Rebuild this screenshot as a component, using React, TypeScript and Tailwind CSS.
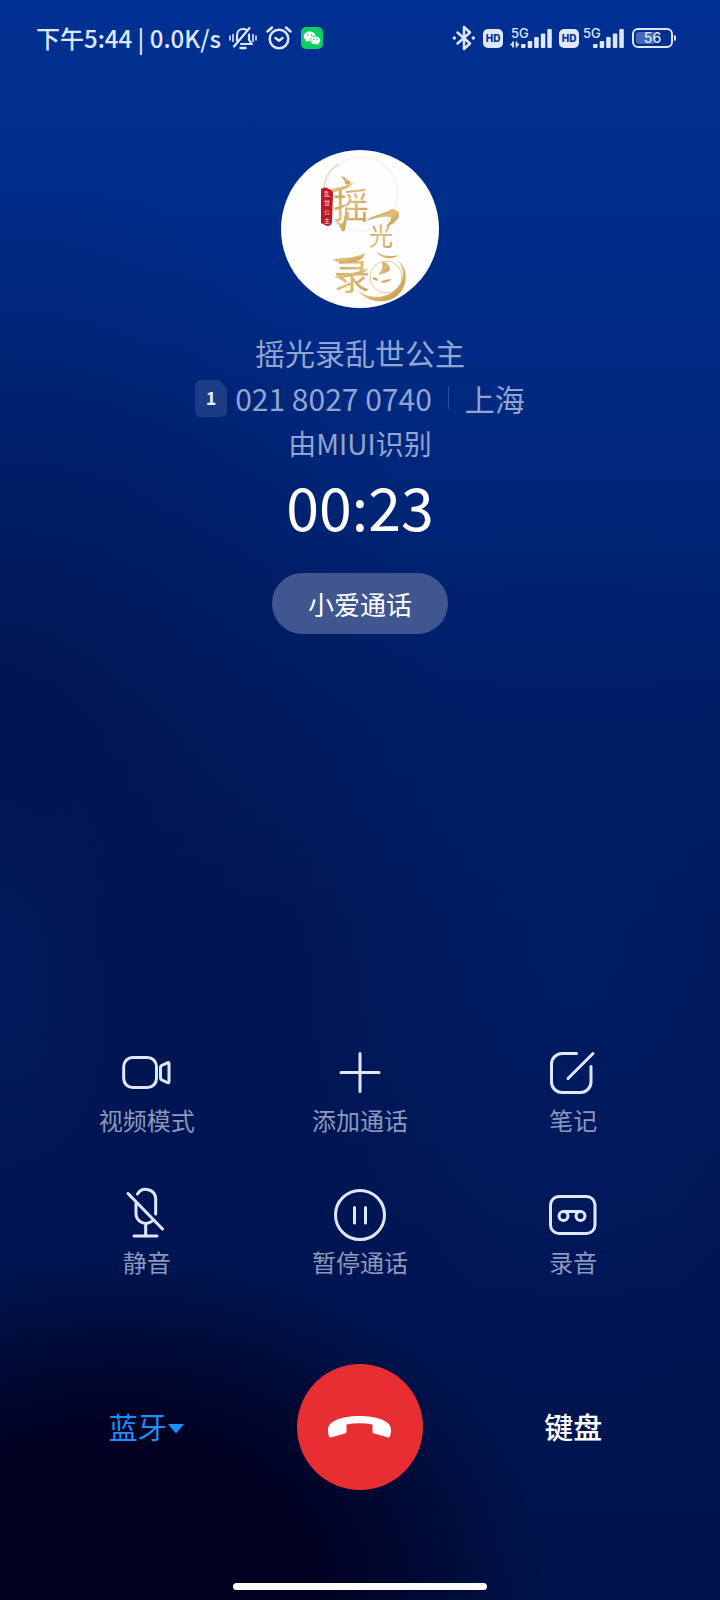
import type { ReactNode } from "react";

function BellOff() {
  return (
    <svg className="h-7 w-7" viewBox="0 0 28 28" fill="none" stroke="currentColor" strokeWidth="2.200" strokeLinecap="round" aria-hidden="true">
      <path d="M8 16.500V11.500C8 7.500 10.500 5 14 5c1.500 0 2.700.3 3.600 1" />
      <path d="M20 10.500V15.500l2.500 4.500H12" />
      <path d="M5 22.500 20.500 4" />
      <path d="M11.500 24h5" strokeWidth="2.500" />
      <path d="M1 12v4M4 10.500v7M24 10.500v7M27 12v4" strokeWidth="1.600" />
    </svg>
  );
}

function Alarm() {
  return (
    <svg className="h-7 w-7" viewBox="0 0 28 28" fill="none" stroke="currentColor" strokeWidth="2.500" strokeLinecap="round" strokeLinejoin="round" aria-hidden="true">
      <circle cx="14" cy="15" r="9.300" />
      <path d="M2.500 7.500 7 3.500M25.500 7.500 21 3.500M10.500 14l3.500 2.800 3.500-2.800" />
    </svg>
  );
}

function WeChat() {
  return (
    <svg className="h-[22px] w-[22px]" viewBox="0 0 22 22" aria-hidden="true">
      <rect width="22" height="22" rx="5" fill="#09cf62" />
      <path fill="#fff" d="M8.800 4.500c-3.400 0-6 2.100-6 4.900 0 1.500.8 2.800 2.100 3.700l-.5 1.900 2-1.100c.8.2 1.600.3 2.400.3 0-3.500 2.700-5.400 5.900-5.400-.5-2.500-3-4.300-5.900-4.300z" />
      <path fill="#fff" d="M14.400 9.500c-2.700 0-4.900 1.700-4.900 3.900s2.200 3.900 4.900 3.900c.6 0 1.200-.1 1.800-.3l1.600.9-.4-1.500c1.100-.8 1.800-1.800 1.800-3 0-2.200-2.100-3.900-4.800-3.900z" />
      <g fill="#09a854">
        <circle cx="6.900" cy="8" r=".8" />
        <circle cx="10.700" cy="8" r=".8" />
        <circle cx="12.900" cy="12.300" r=".7" />
        <circle cx="16" cy="12.300" r=".7" />
      </g>
    </svg>
  );
}

function Bluetooth() {
  return (
    <svg className="h-7 w-6" viewBox="0 0 24 28" fill="none" stroke="currentColor" strokeWidth="2.500" strokeLinejoin="round" strokeLinecap="round" aria-hidden="true">
      <path d="M5.500 8.500 18 19.500 12 25V3l6 5.500L5.500 19.500" />
      <circle cx="2.300" cy="14" r="1" fill="currentColor" strokeWidth="1.400" />
      <circle cx="21.300" cy="14" r="1" fill="currentColor" strokeWidth="1.400" />
    </svg>
  );
}

function HdBadge() {
  return (
    <span className="flex h-[19px] w-5 items-center justify-center rounded-[5px] bg-[#dfe7ff] font-['Inter','Liberation_Sans',sans-serif] text-[10px] leading-none font-extrabold text-[#0a3191]">
      HD
    </span>
  );
}

function Signal({ data = false }: { data?: boolean }) {
  return (
    <svg className="h-6 w-[42px]" viewBox="0 0 42 24" fill="currentColor" role="img" aria-label="5G">
      <text x="1" y="12" fontSize="13" fontWeight="500" fontFamily="Inter, 'Liberation Sans', sans-serif">5G</text>
      <rect x="11" y="18" width="4.500" height="4" rx="1" />
      <rect x="17.700" y="15" width="4.500" height="7" rx="1" />
      <rect x="24.200" y="11" width="4.500" height="11" rx="1" />
      <rect x="30.800" y="7.500" width="4.500" height="14.500" rx="1" />
      <rect x="37.300" y="3" width="4.500" height="19" rx="1" />
      {data && <path d="M3 15.500v6M.5 18.500h2.500M6.500 21.500v-6M9 18.500H6.500" fill="none" stroke="currentColor" strokeWidth="1.800" />}
    </svg>
  );
}

function Battery() {
  return (
    <span className="flex items-center">
      <span className="flex h-5 w-[41px] rounded-[6px] border-2 border-[#dfe7ff] p-0.5">
        <span className="flex flex-1 items-center justify-center rounded-[3px] bg-linear-to-r from-[#4469b8] from-56% to-transparent to-56% font-['Inter','Liberation_Sans',sans-serif] text-sm leading-none font-medium">
          56
        </span>
      </span>
      <span className="ml-px h-1.5 w-0.5 rounded-r bg-[#dfe7ff]" />
    </span>
  );
}

function Avatar() {
  return (
    <svg className="size-[158px] rounded-full bg-[#fefefe]" viewBox="11 10 158 158" role="img" aria-label="摇光录">
      <defs>
        <linearGradient id="gold" x1="0" y1="0" x2="1" y2="1">
          <stop offset="0" stopColor="#b98a3c" />
          <stop offset=".5" stopColor="#e0bf80" />
          <stop offset="1" stopColor="#c2923f" />
        </linearGradient>
      </defs>
      <circle cx="91" cy="54" r="37" fill="none" stroke="#f3eee0" strokeWidth="1.200" />
      <path d="M54 52C53 40 59 30 68 24" fill="none" stroke="#e6d3a8" strokeWidth="1.200" />
      <g fill="url(#gold)" fontFamily="'Noto Sans CJK SC', sans-serif">
        <text x="63" y="79" fontSize="36" fontWeight="400">摇</text>
        <text x="99" y="105" fontSize="24" fontWeight="400">光</text>
        <text x="64" y="150" fontSize="36" fontWeight="400">录</text>
      </g>
      <g fill="url(#gold)">
        <path d="M54 54C62 46 72 49 84 42c-7 9-16 9-30 12z" />
        <path d="M71 36c4 1 6 4 10 6-2 3-4 3-6 2 0-3-2-5-4-8z" />
        <path d="M76 64c2 9 1 17-1 25 0 3-3 3-4 0l-5-8c3 2 6 4 7 1 2-5 2-12 3-18z" />
        <path d="M96 81c5-6 16-6 26-12 5 1 8 3 7 8-3 5-8 8-13 10 2-4 5-6 5-10-8-1-16 1-25 4z" />
        <path d="M106 111c4 5 16 6 23 4-5 4-17 6-23-4z" />
        <path d="M88 150c7 8 27 10 37 0 9-8 11-20 3-29 11 7 10 25 0 34-11 10-32 8-40-5z" />
        <path d="M112 122c5 0 8 3 8 8-3 2-6 4-12 5 3-4 6-8 4-13z" />
        <path d="M102 138c4-1 6 0 6 3-2 0-4-1-6-3zM110 142c3-2 7-3 12-3-3 3-8 5-12 3z" />
        <path d="M62 120c11-3 21-1 33-7-1 7-8 8-14 9-6 1-13 0-19-2z" />
        <path d="M64 137c9-4 21-3 34-9-4 6-9 6-15 8-6 1-12 3-19 1z" />
      </g>
      <circle cx="116" cy="137" r="16" fill="none" stroke="#e3cb97" strokeWidth="1" />
      <path d="M51 49q4-3 8 0 4 1 4 5l-1 27q0 5-5 5l-6-3z" fill="#bd1a25" />
      <g fill="#f7dada" fontSize="6" fontFamily="'Noto Sans CJK SC', sans-serif" textAnchor="middle">
        <text x="57" y="56">乱</text>
        <text x="57" y="65">世</text>
        <text x="57" y="74">公</text>
        <text x="57" y="83">主</text>
      </g>
    </svg>
  );
}

const actions: { label: string; icon: ReactNode }[] = [
  {
    label: "视频模式",
    icon: (
      <>
        <rect x="6.700" y="15.500" width="32.800" height="30" rx="9" />
        <path d="M43.500 25.500q0-1.500 1.200-2l5.500-2.700q1.800-.8 1.800 1V39.500q0 1.800-1.800 1l-5.500-2.700q-1.200-.5-1.200-2z" />
      </>
    ),
  },
  { label: "添加通话", icon: <path d="M30 11.500v38M11 30.500h38" /> },
  {
    label: "笔记",
    icon: <path d="M33.500 11.500H19A10.500 10.500 0 0 0 8.500 22v18A10.500 10.500 0 0 0 19 50.500h18.500A10.500 10.500 0 0 0 48 40V24.500M25 36.500 50 11.500" />,
  },
  {
    label: "静音",
    icon: (
      <path d="M20.500 10A9.900 9.900 0 0 1 38.700 14.500V30M19 19v10.500A9.900 9.900 0 0 0 34.500 37.600M11 9.500 45.500 45M28.700 40v12M17 52h23" />
    ),
  },
  {
    label: "暂停通话",
    icon: (
      <>
        <circle cx="30" cy="31" r="24.500" />
        <path d="M24.500 23.500v15.500M35.500 23.500v15.500" />
      </>
    ),
  },
  {
    label: "录音",
    icon: (
      <>
        <rect x="7.500" y="12.500" width="44.500" height="37" rx="8.500" />
        <circle cx="20.500" cy="32" r="4.500" />
        <circle cx="37.500" cy="32" r="4.500" />
        <path d="M20.500 27.500h17" />
      </>
    ),
  },
];

export default function App() {
  return (
    <div className="flex min-h-screen flex-col bg-[radial-gradient(ellipse_430px_330px_at_16%_99%,#00001f_0%,#00001ff2_46%,#00001f80_73%,#00001f00_100%),radial-gradient(ellipse_160px_280px_at_0%_61%,#001c6299_0%,#001c6200_100%),radial-gradient(ellipse_280px_480px_at_80%_58%,#001f6aaa_0%,#001f6a00_100%),radial-gradient(ellipse_460px_560px_at_0%_46%,#00124ccc_0%,#00124c00_100%),linear-gradient(180deg,#003092_0%,#002b86_20%,#002577_33%,#001d65_45%,#001757_58%,#001552_80%,#00134c_100%)] font-['Noto_Sans_CJK_SC',sans-serif] text-white">
      <header className="flex h-[76px] items-center justify-between pr-11 pl-9 text-[#dfe7ff]">
        <div className="flex items-center">
          <span className="text-2xl font-medium whitespace-nowrap">下午5:44 | 0.0K/s</span>
          <div className="ml-2 flex items-center gap-2">
            <BellOff />
            <Alarm />
            <WeChat />
          </div>
        </div>
        <div className="flex items-center gap-[7px]">
          <Bluetooth />
          <HdBadge />
          <Signal data />
          <HdBadge />
          <div className="-ml-1 flex items-center gap-2">
            <Signal />
            <Battery />
          </div>
        </div>
      </header>

      <main className="flex flex-1 flex-col">
        <section className="flex flex-col items-center pt-[74px] text-[#93a4d0]">
          <Avatar />
          <h1 className="mt-6 mb-1 text-[30px] leading-10">摇光录乱世公主</h1>
          <div className="flex h-11 items-center text-[30px]">
            <svg className="mr-2 h-[37px] w-8" viewBox="0 0 32 37" role="img" aria-label="SIM 1">
              <path d="M6 0h18l8 8.500V31a6 6 0 0 1-6 6H6a6 6 0 0 1-6-6V6a6 6 0 0 1 6-6z" fill="#fff" fillOpacity=".11" />
              <text x="16" y="25" textAnchor="middle" fontSize="18" fontWeight="700" fill="#e6ecff" fontFamily="'Noto Sans CJK SC', sans-serif">1</text>
            </svg>
            <span>021 8027 0740</span>
            <span className="mx-4 h-[22px] w-px bg-[#2f4f9c]" />
            <span>上海</span>
          </div>
          <p className="text-[28px] leading-[46px]">由MIUI识别</p>
          <time className="text-[59px] leading-[80px] text-white">00:23</time>
          <button className="mt-[27px] h-[61px] rounded-full bg-[#40568f] px-9 text-[26px] text-white">小爱通话</button>
        </section>

        <div className="min-h-10 flex-1" />

        <section className="grid grid-cols-3 gap-y-[46px] px-10">
          {actions.map(({ label, icon }) => (
            <button key={label} className="flex flex-col items-center text-2xl leading-9 text-[#8c98bd]">
              <svg className="size-[60px] text-[#dfe7ff]" viewBox="0 0 60 60" fill="none" stroke="currentColor" strokeWidth="3" strokeLinecap="round" strokeLinejoin="round" aria-hidden="true">
                {icon}
              </svg>
              {label}
            </button>
          ))}
        </section>

        <section className="mt-[84px] grid grid-cols-3 items-center px-10 text-[29px]">
          <button className="flex items-center justify-center text-[#1f8dfa]">
            蓝牙
            <svg className="mt-1 h-[10px] w-[18px]" viewBox="0 0 18 10" fill="currentColor" aria-hidden="true">
              <path d="M1 0h16L9 9.500z" />
            </svg>
          </button>
          <button aria-label="挂断" className="flex size-[126px] items-center justify-center justify-self-center rounded-full bg-[#e72e33]">
            <svg className="h-6 w-[63px]" viewBox="0 0 63 24" fill="#fff" aria-hidden="true">
              <path d="M31.500 1C14 1 0 6 0 14.500c0 3 .5 5.500 1 7 .5 1 1.500 1.200 2.500.8L17 18.500c1-.3 1.500-.8 1.500-2V9.500Q31.500 7 44.500 9.500v7c0 1.200.5 1.700 1.500 2l13.500 3.800c1 .4 2 .2 2.500-.8.5-1.500 1-4 1-7C63 6 49 1 31.500 1z" />
            </svg>
          </button>
          <button className="font-medium text-white">键盘</button>
        </section>
      </main>

      <footer className="flex justify-center pt-[93px] pb-[10px]">
        <div className="h-[7px] w-[254px] rounded-full bg-white" />
      </footer>
    </div>
  );
}
